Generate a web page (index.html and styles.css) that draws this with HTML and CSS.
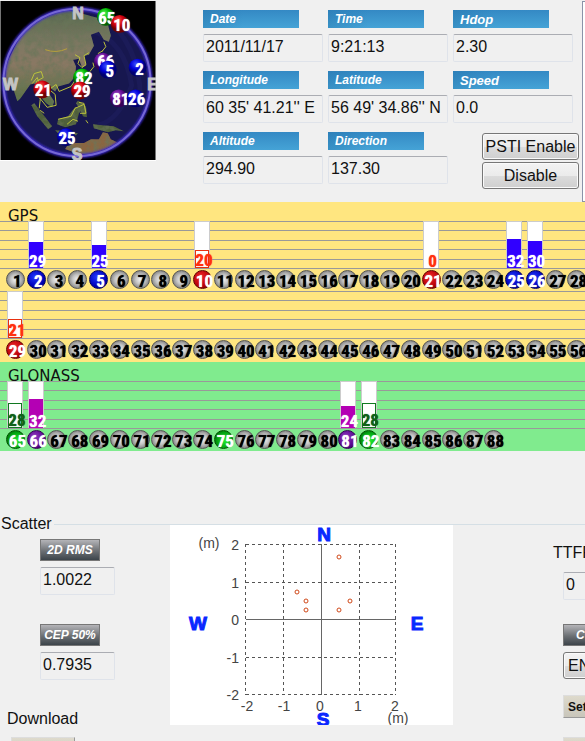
FILE: index.html
```html
<!DOCTYPE html>
<html lang="en">
<head>
<meta charset="utf-8">
<title>GNSS Viewer</title>
<link rel="stylesheet" href="styles.css">
</head>
<body>
<main class="viewer">
  <section class="top">
    <svg class="globe" viewBox="0 0 156 160" width="156" height="160" role="img" aria-label="Sky view">
      <defs>
        <radialGradient id="red" cx=".4" cy=".3"><stop offset="0" stop-color="#ff5a4a"/><stop offset=".6" stop-color="#d00010"/><stop offset="1" stop-color="#700000"/></radialGradient>
        <radialGradient id="blue" cx=".4" cy=".3"><stop offset="0" stop-color="#3a4cff"/><stop offset=".6" stop-color="#0000d8"/><stop offset="1" stop-color="#000070"/></radialGradient>
        <radialGradient id="green" cx=".4" cy=".3"><stop offset="0" stop-color="#5cf85c"/><stop offset=".6" stop-color="#00b800"/><stop offset="1" stop-color="#006000"/></radialGradient>
        <radialGradient id="purple" cx=".4" cy=".3"><stop offset="0" stop-color="#a050c8"/><stop offset=".6" stop-color="#681098"/><stop offset="1" stop-color="#380058"/></radialGradient>
        <linearGradient id="land" x1="0" y1="0" x2="0" y2="1"><stop offset="0" stop-color="#56694f"/><stop offset=".35" stop-color="#7d7862"/><stop offset=".55" stop-color="#8a7864"/><stop offset="1" stop-color="#52703f"/></linearGradient>
        <filter id="rough" x="0" y="0" width="1" height="1"><feTurbulence type="fractalNoise" baseFrequency=".16" numOctaves="3" seed="4" result="n"/><feColorMatrix in="n" values="0 0 0 0 .14  0 0 0 0 .18  0 0 0 0 .1  1.8 0 0 0 -.65" result="s"/><feComposite in="s" in2="SourceGraphic" operator="in" result="t"/><feMerge><feMergeNode in="SourceGraphic"/><feMergeNode in="t"/></feMerge></filter>
        <filter id="glow"><feGaussianBlur stdDeviation="1"/></filter>
        <clipPath id="disc"><circle cx="77" cy="82" r="73"/></clipPath>
      </defs>
      <rect width="156" height="160" fill="#000"/>
      <g clip-path="url(#disc)">
        <rect width="156" height="160" fill="#17174f"/>
        <path d="M92 30Q125 40 132 85Q120 120 98 125M110 20Q145 55 140 110" fill="none" stroke="#1b1b58" stroke-width="5"/>
        <g filter="url(#rough)">
          <path fill="url(#land)" d="M10 55L24 27L45 12L66 9L80 12L98 17L108 23L111 35L109 41L104 39L99 31L91 34L94 45L89 54L84 55L86 65L82 67L79 58L73 59L76 66L75 76L69 83L58 86L55 91L51 88L48 92L54 101L52 107L46 103L41 97L38 89L34 83L30 84L20 98L17 101L12 86L5 83V65Z"/>
          <path fill="#50603a" d="M34 103L42 113L52 126L48 129L37 116L31 105ZM58 119L68 116L75 107L84 107L79 113L76 124L65 127L57 124ZM55 130L65 131L78 133L76 135L58 133ZM78 100L86 106L87 117L83 116L80 109L76 103ZM93 124L102 125L114 126L124 131L116 130L108 132L94 128Z"/>
          <path fill="#8a6642" d="M67 146L75 143L84 143L91 139L99 139L103 132L108 133L111 139L119 143L110 150L95 156L76 153L65 149Z"/>
        </g>
        <path d="M45 49Q56 53 67 48" fill="none" stroke="#b8a13a"/>
        <path fill="none" stroke="#bdc33c" d="M75 54L80 57L78 63L82 67L86 64L84 55L89 52M90 71L94 66L93 62M102 51L106 46L104 41M98 53L103 50M31 80L34 73L41 71L43 77L36 81L39 90L40 99L39 108M32 83L37 77L39 83L46 83L49 88M39 97L47 107L56 105L55 94L49 89L56 84L59 91L71 86L77 77M58 119L71 116L75 108L84 104M67 124L73 119L78 121M79 102L84 103L86 113L80 113M86 120L88 123M40 110L44 113"/>
        <path d="M13 42Q20 26 33 19" fill="none" stroke="#c4b534" stroke-width="2"/>
      </g>
      <circle cx="77" cy="82" r="74" fill="none" stroke="#3c2cd0" stroke-width="4" filter="url(#glow)"/>
      <circle cx="77" cy="82" r="74" fill="none" stroke="#7668d4" stroke-width="2"/>
      <g class="compass"><text x="78" y="18">N</text><text x="77" y="160">S</text><text x="10" y="90">W</text><text x="153" y="90">E</text></g>
      <g class="mark">
        <circle cx="106" cy="16" r="9" fill="url(#green)"/><text x="107" y="23">65</text>
        <circle cx="120" cy="23" r="9" fill="url(#red)"/><text x="122" y="30">10</text>
        <circle cx="103" cy="61" r="9" fill="url(#purple)"/><text x="106" y="66">66</text>
        <circle cx="108" cy="69" r="9" fill="url(#blue)"/><text x="110" y="76">5</text>
        <circle cx="138" cy="67" r="9" fill="url(#blue)"/><text x="140" y="74">2</text>
        <circle cx="82" cy="77" r="9" fill="url(#green)"/><text x="84" y="84">82</text>
        <circle cx="42" cy="89" r="9" fill="url(#red)"/><text x="43" y="96">21</text>
        <circle cx="80" cy="90" r="9" fill="url(#red)"/><text x="82" y="97">29</text>
        <circle cx="119" cy="98" r="9" fill="url(#purple)"/><text x="121" y="105">81</text>
        <circle cx="136" cy="98" r="9" fill="url(#blue)"/><text x="137" y="105">26</text>
        <circle cx="66" cy="137" r="9" fill="url(#blue)"/><text x="67" y="144">25</text>
      </g>
    </svg>
    <div class="fields">
      <div class="field"><label for="date">Date</label><input id="date" readonly value="2011/11/17"></div>
      <div class="field"><label for="time">Time</label><input id="time" readonly value="9:21:13"></div>
      <div class="field"><label class="heavy" for="hdop">Hdop</label><input id="hdop" readonly value="2.30"></div>
      <div class="field"><label for="lon">Longitude</label><input id="lon" readonly value="60 35' 41.21'' E"></div>
      <div class="field"><label for="lat">Latitude</label><input id="lat" readonly value="56 49' 34.86'' N"></div>
      <div class="field"><label class="heavy" for="speed">Speed</label><input id="speed" readonly value="0.0"></div>
      <div class="field"><label for="alt">Altitude</label><input id="alt" readonly value="294.90"></div>
      <div class="field"><label for="dir">Direction</label><input id="dir" readonly value="137.30"></div>
      <div class="buttons"><button class="push" type="button">PSTI Enable</button><button class="push" type="button">Disable</button></div>
    </div>
    <div class="side"></div>
  </section>

  <section class="band gps"><h2>GPS</h2><div class="row" data-from="1" data-to="28"></div><div class="row" data-from="29" data-to="56"></div></section>
  <section class="band glonass"><h2>GLONASS</h2><div class="row" data-from="65" data-to="88"></div></section>

  <fieldset class="scatter">
    <legend>Scatter</legend>
    <div class="columns">
      <div class="stats">
        <div class="stat"><label for="rms">2D RMS</label><input id="rms" readonly value="1.0022"></div>
        <div class="stat"><label for="cep">CEP 50%</label><input id="cep" readonly value="0.7935"></div>
        <h3>Download</h3>
        <button class="plain stub" type="button" aria-label="Download"></button>
      </div>
      <svg class="plot" viewBox="0 0 283 200" width="283" height="200" role="img" aria-label="Scatter plot">
        <rect width="283" height="200" fill="#fff"/>
        <path class="dash" d="M76 19.500H226M76 57.500H226M76 132.500H226M76 169.500H226M75.500 19V170M113.500 19V170M189.500 19V170M225.500 19V170"/>
        <path class="axis" d="M76 94.500H226M151.500 19V170"/>
        <g class="ticks end"><text x="69" y="25">2</text><text x="69" y="63">1</text><text x="69" y="100">0</text><text x="69" y="138">-1</text><text x="69" y="175">-2</text></g>
        <g class="ticks"><text x="77" y="186">-2</text><text x="114" y="186">-1</text><text x="150" y="186">0</text><text x="188" y="186">1</text><text x="225" y="186">2</text></g>
        <g class="ticks unit"><text x="39" y="23">(m)</text><text x="228" y="198">(m)</text></g>
        <g class="points"><circle cx="169" cy="32" r="2"/><circle cx="127" cy="67" r="2"/><circle cx="136" cy="76" r="2"/><circle cx="136" cy="85" r="2"/><circle cx="169" cy="85" r="2"/><circle cx="180" cy="76" r="2"/></g>
        <g class="poles"><text x="154" y="16">N</text><text x="153" y="201">S</text><text x="28" y="105">W</text><text x="247" y="105">E</text></g>
      </svg>
      <div class="controls">
        <label class="ttff" for="ttff">TTFF</label><input id="ttff" readonly value="0">
        <span class="badge">COLD</span>
        <button class="push" type="button">ENABLE</button>
        <button class="plain" type="button">Setup</button>
        <button class="plain" type="button" aria-label="More"></button>
      </div>
    </div>
  </fieldset>
</main>
<script src="app.js"></script>
</body>
</html>
```
FILE: styles.css
```css
* { box-sizing: border-box; }
html, body { height: 100%; }
body { margin: 0; overflow: hidden; background: #f0f0f0; color: #111; font: 16px "Liberation Sans", Arial, sans-serif; }
h2, h3, fieldset, legend { margin: 0; padding: 0; font-size: 16px; font-weight: 400; }
input, button { font: inherit; color: inherit; margin: 0; }
.viewer { display: flex; flex-direction: column; }

.top { display: flex; height: 202px; padding-top: 1px; }
.globe { display: block; flex: none; border-bottom: 1px solid #fff; }
.compass text { fill: #c4c4c4; stroke: #c4c4c4; font-weight: 700; font-size: 16px; text-anchor: middle; }
.mark text { fill: #fff; font: 700 17px "Liberation Sans Narrow", "Roboto Condensed", "Liberation Sans", sans-serif; text-anchor: middle; text-shadow: 0 0 1px #fff; }
.fields { display: grid; flex: none; grid-template-columns: repeat(3, 120px); align-content: start; gap: 9px 5px; margin-left: 47px; padding-top: 9px; }
.field, .stat { display: flex; flex-direction: column; align-items: flex-start; gap: 6px; }
.field label { width: 96px; height: 18px; padding-left: 7px; background: linear-gradient(90deg, #1f6ea455, #1f6ea400 40px), linear-gradient(#3489c4, #45a3d6); color: #fff; font: italic 700 12px/19px "Liberation Sans", sans-serif; }
.field .heavy { font-family: "Liberation Sans Narrow", "Liberation Sans", sans-serif; font-size: 13px; }
input { width: 100%; height: 28px; padding: 0 2px 2px; border: 1px solid #dfe3ea; border-top-color: #abadb3; border-radius: 2px; background: #f0f0f0; }
.buttons { display: flex; flex-direction: column; gap: 2px; margin: 1px -6px 0 29px; }
.push { height: 27px; padding: 0; border: 1px solid #777; border-radius: 3px; background: linear-gradient(#f3f3f3, #ebebeb 50%, #dcdcdc 51%, #cfcfcf); box-shadow: inset 0 0 0 1px #fafafa; white-space: nowrap; }
.side { flex: 1; margin-left: 9px; border: 1px solid #8a93a8; border-right: 0; background: #fff; }

.band { overflow: hidden; }
.gps { height: 160px; background: #ffe680; }
.glonass { height: 89px; background: #80eb8e; }
.band h2 { height: 19px; padding-left: 8px; font: 15px/28px "DejaVu Sans", sans-serif; white-space: nowrap; }
.row { display: grid; grid-template-columns: repeat(28, 1fr); height: 70px; padding-left: 5px; margin-right: -2px;
  background: linear-gradient(#999, #999) 0 0 / 100% 1px no-repeat, linear-gradient(#999, #999) 0 9px / 100% 1px no-repeat, linear-gradient(#999, #999) 0 19px / 100% 1px no-repeat, linear-gradient(#999, #999) 0 28px / 100% 1px no-repeat, linear-gradient(#999, #999) 0 38px / 100% 1px no-repeat, linear-gradient(#999, #999) 0 47px / 100% 1px no-repeat; }
.sat { display: flex; flex-direction: column; align-items: center; min-width: 0; font: 700 17px/18px "Liberation Sans Narrow", "Roboto Condensed", "Liberation Sans", sans-serif; text-shadow: 0 0 1px currentColor; }
.track { display: flex; align-items: flex-end; width: 16px; height: 47px; margin-bottom: 2px; }
.track.on { background: #fff; border: 1px solid #ccc; border-bottom: 0; }
.level { display: flex; align-items: flex-end; justify-content: center; width: 100%; color: #fff; line-height: 14px; }
.level span { margin-right: -3px; }
.level.blue { background: #3000ff; }
.level.purple { background: #b400b4; }
.level.red { border: 1px solid #e83010; color: #ff3010; }
.level.green { border: 1px solid #107820; color: #106018; }
.level.red.none { border: 0; }
.ball { display: flex; justify-content: center; width: 19px; height: 19px; border: 1px solid #555; border-radius: 50%; background: radial-gradient(circle at 50% 50%, #f4f4f4, #c4c4c4 40%, #555); color: #000; line-height: 20px; }
.ball span { margin-right: -4px; }
.ball.blue { background: radial-gradient(circle at 40% 35%, #2038ff, #0000b8 60%, #000060); border-color: #000060; color: #fff; }
.ball.red { background: radial-gradient(circle at 40% 35%, #f02828, #b80008 60%, #600000); border-color: #600000; color: #fff; }
.ball.green { background: radial-gradient(circle at 60% 55%, #20f030, #009c10 60%, #005000); border-color: #005000; color: #fff; }
.ball.purple { background: radial-gradient(circle at 40% 35%, #9038c0, #580890 60%, #300050); border-color: #300050; color: #fff; }

.scatter { min-width: 0; margin-top: 64px; border: 0; border-top: 1px solid #d5dfe5; }
.scatter legend { padding: 0 2px 0 1px; line-height: 18px; }
.columns { display: grid; grid-template-columns: 170px 283px minmax(0, 1fr); align-items: start; margin-top: -8px; }
.stats { display: flex; flex-direction: column; padding-top: 14px; }
.stat { width: 115px; padding-left: 40px; margin-bottom: 29px; }
.stat label, .badge { width: 60px; height: 22px; border: 1px solid #777; background: linear-gradient(#b4b4b8, #6c7074 55%, #3c444a); color: #fff; font: italic 700 12px/21px "Liberation Sans", sans-serif; text-align: center; white-space: nowrap; }
.stats h3 { padding-left: 7px; line-height: 20px; }
.plain { width: 64px; height: 23px; padding: 0 4px; border: 1px solid #aaa; border-color: #ddd #999 #999 #ddd; background: linear-gradient(#dedacc, #c8c5ba); font: 700 12px "Liberation Sans", sans-serif; text-align: left; }
.stub { margin: 8px 0 0 11px; }
.plot { display: block; }
.plot text { text-anchor: middle; }
.dash { fill: none; stroke: #555; stroke-dasharray: 3 3; }
.axis { fill: none; stroke: #666; }
.plot .ticks { fill: #444; font-size: 14px; }
.plot .end text { text-anchor: end; }
.points { fill: #fff; stroke: #d04818; }
.poles { fill: #0a28ff; stroke: #0a28ff; font-weight: 700; font-size: 19px; }
.controls { display: flex; flex-direction: column; align-items: flex-start; padding: 19px 0 0 110px; overflow: hidden; }
.controls > * { flex: none; }
.ttff { margin: 0 0 10px -10px; line-height: 18px; }
.controls input { width: 75px; }
.badge { margin: 24px 0 6px; }
.controls .push { width: 75px; padding-left: 4px; text-align: left; }
.controls .plain { margin: 16px 0 3px; }
```
FILE: app.js
```js
// Signal strength of each tracked satellite and the colour of its bar.
const signals = {
  2: [29, 'blue'], 5: [25, 'blue'], 10: [20, 'red'], 21: [0, 'red'],
  25: [32, 'blue'], 26: [30, 'blue'], 29: [21, 'red'],
  65: [28, 'green'], 66: [32, 'purple'], 75: [null, 'green'],
  81: [24, 'purple'], 82: [28, 'green']
};

function satellite(id) {
  const [level, color] = signals[id] || [null, ''];
  const bar = level === null ? '' :
    `<div class="level ${color} ${level ? '' : 'none'}" style="height:${Math.round(level * 0.9)}px"><span>${level}</span></div>`;
  return `<div class="sat"><div class="track ${bar ? 'on' : ''}">${bar}</div><div class="ball ${color}"><span>${id}</span></div></div>`;
}

document.querySelectorAll('.row').forEach(row => {
  let html = '';
  for (let id = +row.dataset.from; id <= +row.dataset.to; id++) html += satellite(id);
  row.innerHTML = html;
});
```
